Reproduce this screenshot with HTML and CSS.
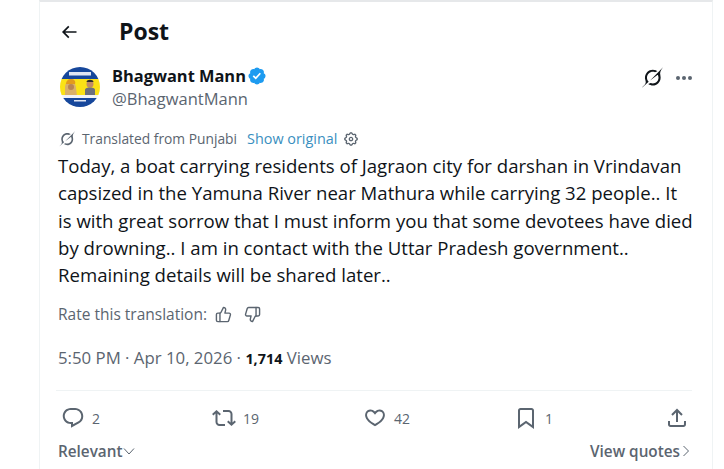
FILE: index.html
```html
<!DOCTYPE html>
<html lang="en">
<head>
    <meta charset="UTF-8">
    <title>Post</title>
    <link rel="stylesheet" href="styles.css">
</head>
<body>
    <div class="column">
        <div class="top-bar">
            <svg class="back-icon" viewBox="0 0 24 24"><path d="M7.414 13l5.043 5.04-1.414 1.42L3.586 12l7.457-7.46 1.414 1.42L7.414 11H21v2H7.414z"/></svg>
            <h1 class="top-title">Post</h1>
        </div>

        <div class="author">
            <svg class="avatar" viewBox="0 0 40 40">
                <defs>
                    <clipPath id="avatarClip"><circle cx="20" cy="20" r="20"/></clipPath>
                    <filter id="soft"><feGaussianBlur stdDeviation="0.45"/></filter>
                </defs>
                <g clip-path="url(#avatarClip)">
                    <g filter="url(#soft)">
                        <rect width="40" height="40" fill="#fbe216"/>
                        <rect width="40" height="12" fill="#17479b"/>
                        <rect x="9" y="5" width="22" height="3.500" fill="#dfe6f3"/>
                        <path d="M5 21c0-4 2-7 5-7s6 3 6 7l1 8H5z" fill="#d9b06a"/>
                        <path d="M6 17c0-3 2-5 5-5s5 2 4 5z" fill="#e39a1f"/>
                        <circle cx="11" cy="20" r="3" fill="#b98352"/>
                        <circle cx="30" cy="17" r="3.500" fill="#c08a66"/>
                        <path d="M26.500 15c0-3 7-3 7 0z" fill="#2b2b2b"/>
                        <path d="M25 29v-6c0-2 3-2.500 5-2.500s5 .5 5 2.500v6z" fill="#6c6f7e"/>
                        <rect y="28" width="40" height="3.500" fill="#f1f3f6"/>
                        <rect y="31" width="40" height="9" fill="#17479b"/>
                        <rect x="14" y="33" width="12" height="1.500" fill="#dfe6f3"/>
                    </g>
                </g>
            </svg>
            <div class="author-names">
                <div class="author-line">
                    <span class="author-name">Bhagwant Mann</span>
                    <svg class="verified" viewBox="0 0 22 22"><path fill="#1d9bf0" d="M20.396 11c-.018-.646-.215-1.275-.57-1.816-.354-.54-.852-.972-1.438-1.246.223-.607.27-1.264.14-1.897-.131-.634-.437-1.218-.882-1.687-.47-.445-1.053-.75-1.687-.882-.633-.13-1.29-.083-1.897.14-.273-.587-.704-1.086-1.245-1.44S11.647 1.62 11 1.604c-.646.017-1.273.213-1.813.568s-.969.854-1.24 1.44c-.608-.223-1.267-.272-1.902-.14-.635.13-1.22.436-1.69.882-.445.47-.749 1.055-.878 1.688-.13.633-.08 1.29.144 1.896-.587.274-1.087.705-1.443 1.245-.356.54-.555 1.17-.574 1.817.02.647.218 1.276.574 1.817.356.54.856.972 1.443 1.245-.224.606-.274 1.263-.144 1.896.13.634.433 1.218.877 1.688.47.443 1.054.747 1.687.878.633.132 1.29.084 1.897-.136.274.586.705 1.084 1.246 1.439.54.354 1.17.551 1.816.569.647-.016 1.276-.213 1.817-.567s.972-.854 1.245-1.44c.604.239 1.266.296 1.903.164.636-.132 1.22-.447 1.68-.907.46-.46.776-1.044.908-1.681s.075-1.299-.165-1.903c.586-.274 1.084-.705 1.439-1.246.354-.54.551-1.17.569-1.816z"/><path fill="#fff" d="M9.662 14.85l-3.429-3.428 1.293-1.302 2.072 2.072 4.4-4.794 1.347 1.246z"/></svg>
                </div>
                <div class="author-handle">@BhagwantMann</div>
            </div>
            <div class="author-actions">
                <svg class="grok-icon" viewBox="0 0 33 32"><path d="M12.745 20.54l10.97-8.19c.539-.4 1.307-.244 1.564.38 1.349 3.288.746 7.241-1.938 9.955-2.683 2.714-6.417 3.31-9.83 1.954l-3.728 1.745c5.347 3.697 11.84 2.782 15.898-1.324 3.219-3.255 4.216-7.692 3.284-11.693l.008.009c-1.351-5.878.332-8.227 3.782-13.031L33 0l-4.54 4.59v-.014L12.743 20.544m-2.263 1.987c-3.837-3.707-3.175-9.446.1-12.755 2.42-2.449 6.388-3.448 9.852-1.979l3.72-1.737c-.67-.49-1.53-1.017-2.515-1.387-4.455-1.854-9.789-.931-13.41 2.728-3.483 3.523-4.579 8.94-2.697 13.561 1.405 3.454-.899 5.898-3.22 8.364C1.49 30.2.666 31.074 0 32l10.478-9.466"/></svg>
                <div class="more-dots"><span></span><span></span><span></span></div>
            </div>
        </div>

        <div class="translated">
            <svg class="grok-small" viewBox="0 0 33 32"><path d="M12.745 20.54l10.97-8.19c.539-.4 1.307-.244 1.564.38 1.349 3.288.746 7.241-1.938 9.955-2.683 2.714-6.417 3.31-9.83 1.954l-3.728 1.745c5.347 3.697 11.84 2.782 15.898-1.324 3.219-3.255 4.216-7.692 3.284-11.693l.008.009c-1.351-5.878.332-8.227 3.782-13.031L33 0l-4.54 4.59v-.014L12.743 20.544m-2.263 1.987c-3.837-3.707-3.175-9.446.1-12.755 2.42-2.449 6.388-3.448 9.852-1.979l3.72-1.737c-.67-.49-1.53-1.017-2.515-1.387-4.455-1.854-9.789-.931-13.41 2.728-3.483 3.523-4.579 8.94-2.697 13.561 1.405 3.454-.899 5.898-3.22 8.364C1.49 30.2.666 31.074 0 32l10.478-9.466"/></svg>
            <span>Translated from Punjabi</span>
            <span class="show-original">Show original</span>
            <svg class="gear" viewBox="0 0 24 24"><path d="M10.54 1.75h2.92l1.57 2.36c.11.17.32.25.53.21l2.53-.59 2.17 2.17-.58 2.54c-.05.2.04.41.21.53l2.36 1.57v2.92l-2.36 1.57c-.17.12-.26.33-.21.53l.58 2.54-2.17 2.17-2.53-.59c-.21-.04-.42.04-.53.21l-1.57 2.36h-2.92l-1.58-2.36c-.11-.17-.32-.25-.52-.21l-2.54.59-2.17-2.17.58-2.54c.05-.2-.03-.41-.21-.53l-2.35-1.57v-2.92L4.1 8.97c.18-.12.26-.33.21-.53L3.73 5.9 5.9 3.73l2.54.59c.2.04.41-.04.52-.21l1.58-2.36zm1.07 2l-.98 1.47C10.05 6.08 9 6.5 7.99 6.27l-1.46-.34-.6.6.33 1.46c.24 1.01-.18 2.07-1.05 2.64l-1.46.98v.78l1.46.98c.87.57 1.29 1.63 1.05 2.64l-.33 1.46.6.6 1.46-.34c1.01-.23 2.06.19 2.64 1.05l.98 1.47h.78l.97-1.47c.58-.86 1.63-1.28 2.65-1.05l1.45.34.61-.6-.34-1.46c-.23-1.01.18-2.07 1.05-2.64l1.47-.98v-.78l-1.47-.98c-.87-.57-1.28-1.63-1.05-2.64l.34-1.46-.61-.6-1.45.34c-1.02.23-2.07-.19-2.65-1.05l-.97-1.47h-.78zM12 10.5c-.83 0-1.5.67-1.5 1.5s.67 1.5 1.5 1.5c.82 0 1.5-.67 1.5-1.5s-.68-1.5-1.5-1.5zM8.5 12c0-1.93 1.56-3.5 3.5-3.5 1.93 0 3.5 1.57 3.5 3.5s-1.57 3.5-3.5 3.5c-1.94 0-3.5-1.57-3.5-3.5z"/></svg>
        </div>

        <p class="post-text">Today, a boat carrying residents of Jagraon city for darshan in Vrindavan capsized in the Yamuna River near Mathura while carrying 32 people.. It is with great sorrow that I must inform you that some devotees have died by drowning.. I am in contact with the Uttar Pradesh government.. Remaining details will be shared later..</p>

        <div class="rate">
            <span>Rate this translation:</span>
            <svg class="rate-icon" viewBox="0 0 24 24"><path d="M7 10v12"/><path d="M15 5.880 14 10h5.830a2 2 0 0 1 1.920 2.560l-2.330 8A2 2 0 0 1 17.500 22H4a2 2 0 0 1-2-2v-8a2 2 0 0 1 2-2h2.760a2 2 0 0 0 1.790-1.110L12 2h0a3.130 3.130 0 0 1 3 3.880Z"/></svg>
            <svg class="rate-icon" viewBox="0 0 24 24"><path d="M17 14V2"/><path d="M9 18.120 10 14H4.170a2 2 0 0 1-1.920-2.560l2.330-8A2 2 0 0 1 6.500 2H20a2 2 0 0 1 2 2v8a2 2 0 0 1-2 2h-2.760a2 2 0 0 0-1.790 1.110L12 22h0a3.130 3.130 0 0 1-3-3.880Z"/></svg>
        </div>

        <div class="timestamp">5:50 PM · Apr 10, 2026 · <b>1,714</b> Views</div>

        <div class="actions">
            <div class="action">
                <svg class="action-icon" viewBox="0 0 24 24"><path d="M1.751 10c0-4.420 3.584-8 8.005-8h4.366c4.490 0 8.129 3.640 8.129 8.130 0 2.960-1.607 5.680-4.196 7.110l-8.054 4.460v-3.690h-.067c-4.490.100-8.183-3.510-8.183-8.010zm8.005-6c-3.317 0-6.005 2.690-6.005 6 0 3.370 2.770 6.080 6.138 6.010l.351-.010h1.761v2.300l5.087-2.810c1.951-1.080 3.163-3.130 3.163-5.360 0-3.390-2.744-6.130-6.129-6.130H9.756z"/></svg>
                <span>2</span>
            </div>
            <div class="action">
                <svg class="action-icon" viewBox="0 0 24 24"><path d="M4.500 3.880l4.432 4.140-1.364 1.460L5.500 7.550V16c0 1.100.896 2 2 2H13v2H7.500c-2.209 0-4-1.790-4-4V7.550L1.432 9.480.068 8.020 4.500 3.880zM16.500 6H11V4h5.500c2.209 0 4 1.790 4 4v8.450l2.068-1.930 1.364 1.460-4.432 4.140-4.432-4.140 1.364-1.460 2.068 1.930V8c0-1.100-.896-2-2-2z"/></svg>
                <span>19</span>
            </div>
            <div class="action">
                <svg class="action-icon" viewBox="0 0 24 24"><path d="M16.697 5.500c-1.222-.06-2.679.510-3.890 2.160l-.805 1.090-.806-1.090C9.984 6.010 8.526 5.440 7.304 5.500c-1.243.070-2.349.780-2.900 1.860-.548 1.070-.560 2.560.400 4.310.928 1.690 2.845 3.660 6.200 5.630L12 17.900l1-.600c3.355-1.970 5.272-3.940 6.200-5.630.960-1.750.948-3.240.400-4.310-.551-1.080-1.657-1.790-2.903-1.860zm4.187 7.130c-1.164 2.120-3.410 4.290-7.130 6.520L12 20.200l-1.754-1.050c-3.720-2.230-5.966-4.400-7.130-6.520-1.245-2.270-1.300-4.480-.396-6.240C3.624 4.640 5.356 3.600 7.197 3.500c1.677-.09 3.420.580 4.805 2.060 1.385-1.480 3.127-2.150 4.804-2.060 1.841.1 3.573 1.140 4.477 2.890.904 1.760.849 3.970-.399 6.240z"/></svg>
                <span>42</span>
            </div>
            <div class="action">
                <svg class="action-icon" viewBox="0 0 24 24"><path d="M4 4.500C4 3.120 5.119 2 6.500 2h11C18.881 2 20 3.120 20 4.500v18.440l-8-5.710-8 5.710V4.500zM6.500 4c-.276 0-.5.220-.5.500v14.560l6-4.290 6 4.290V4.500c0-.280-.224-.500-.500-.500h-11z"/></svg>
                <span>1</span>
            </div>
            <svg class="action-icon" viewBox="0 0 24 24"><path d="M12 2.590l5.700 5.700-1.410 1.420L13 6.410V16h-2V6.410l-3.300 3.300-1.410-1.420L12 2.590zM21 15l-.020 3.510c0 1.380-1.130 2.490-2.500 2.490H5.500C4.110 21 3 19.880 3 18.500V15h2v3.500c0 .280.220.500.500.500h12.980c.280 0 .500-.220.500-.500L19 15h2z"/></svg>
        </div>

        <div class="reply-bar">
            <div class="sort">Relevant<svg class="chev" viewBox="0 0 24 24"><path d="M2 7l10 11L22 7" fill="none" stroke="currentColor" stroke-width="2"/></svg></div>
            <div class="sort">View quotes<svg class="chev-right" viewBox="0 0 24 24"><path d="M7 2l10 10L7 22" fill="none" stroke="currentColor" stroke-width="2"/></svg></div>
        </div>
    </div>
</body>
</html>
```

FILE: styles.css
```css
html, body {
    height: 100%;
}

body {
    margin: 0;
    background: #ffffff;
    color: #0f1419;
    font-family: "Open Sans", "Liberation Sans", sans-serif;
    overflow: hidden;
}

.column {
    width: 674px;
    height: 100%;
    margin-left: 39px;
    border-left: 1px solid #eff3f4;
    border-right: 1px solid #eff3f4;
    border-top: 2px solid #e6e8ea;
    padding: 0 20px 0 18px;
    box-sizing: border-box;
}

.top-bar {
    display: flex;
    align-items: center;
    height: 60px;
}

.back-icon {
    width: 20px;
    height: 20px;
    margin-left: 1px;
    fill: #0f1419;
}

.top-title {
    margin: 0 0 2px 40px;
    font-size: 23px;
    line-height: 28px;
    font-weight: 700;
}

.author {
    display: flex;
    align-items: flex-start;
    margin-top: 5px;
}

.avatar {
    width: 40px;
    height: 40px;
    margin-left: 2px;
}

.author-names {
    margin: -3px 0 0 12px;
}

.author-line {
    display: flex;
    align-items: center;
}

.author-name {
    font-size: 16.400px;
    font-weight: 700;
}

.verified {
    width: 20px;
    height: 20px;
    margin-left: 1px;
}

.author-handle {
    font-size: 16.500px;
    color: #5b6570;
}

.author-actions {
    display: flex;
    align-items: center;
    margin-left: auto;
}

.grok-icon {
    width: 21px;
    height: 21px;
    fill: #0f1419;
}

.more-dots {
    display: flex;
    gap: 2px;
    margin-left: 13px;
}

.more-dots span {
    width: 4px;
    height: 4px;
    border-radius: 50%;
    background: #5b6570;
}

.translated {
    display: flex;
    align-items: center;
    margin-top: 19px;
    font-size: 13.800px;
    color: #5b6570;
}

.grok-small {
    width: 16px;
    height: 16px;
    margin: 0 7px 0 1px;
    fill: #5b6570;
}

.show-original {
    color: #3a8fc0;
    font-size: 14.400px;
    margin-left: 10px;
}

.gear {
    width: 16px;
    height: 16px;
    margin-left: 6px;
    fill: #5b6570;
}

.post-text {
    margin: 4px -2px 0 0;
    font-size: 18.600px;
    line-height: 27.300px;
}

.rate {
    display: flex;
    align-items: center;
    margin-top: 15px;
    font-size: 15.500px;
    color: #5b6570;
}

.rate-icon {
    width: 17px;
    height: 17px;
    margin-left: 8px;
    fill: none;
    stroke: #5b6570;
    stroke-width: 2;
    stroke-linejoin: round;
    stroke-linecap: round;
}

.rate-icon + .rate-icon {
    margin-left: 12px;
}

.timestamp {
    margin-top: 21px;
    font-size: 16.800px;
    color: #5b6570;
}

.timestamp b {
    color: #0f1419;
    font-size: 14.400px;
}

.actions {
    display: grid;
    grid-template-columns: repeat(4, 151px) 24px;
    align-items: center;
    margin: 21px 0 0 -2px;
    border-top: 1px solid #eff3f4;
    padding: 15px 0 0 5px;
}

.action {
    display: flex;
    align-items: center;
    gap: 7px;
    font-size: 14px;
    color: #5b6570;
}

.action-icon {
    width: 24px;
    height: 24px;
    fill: #5b6570;
}

.reply-bar {
    display: flex;
    justify-content: space-between;
    margin-top: 11px;
    font-size: 15.300px;
    font-weight: 600;
    color: #5b6570;
}

.sort {
    display: flex;
    align-items: center;
}

.chev {
    width: 12px;
    height: 12px;
    margin-left: 1px;
}

.chev-right {
    width: 12px;
    height: 12px;
}
```
